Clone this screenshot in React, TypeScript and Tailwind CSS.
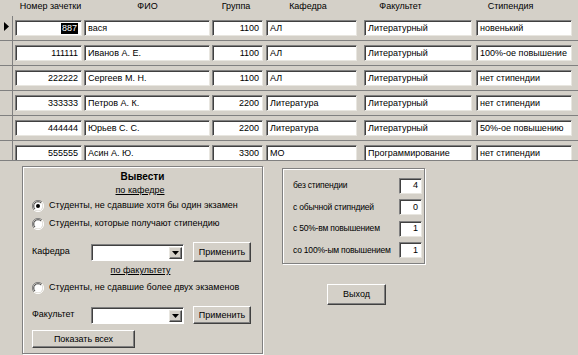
import React from "react";

const rows: string[][] = [
  ["887", "вася", "1100", "АЛ", "Литературный", "новенький"],
  ["111111", "Иванов А. Е.", "1100", "АЛ", "Литературный", "100%-ое повышение"],
  ["222222", "Сергеев М. Н.", "1100", "АЛ", "Литературный", "нет стипендии"],
  ["333333", "Петров А. К.", "2200", "Литература", "Литературный", "нет стипендии"],
  ["444444", "Юрьев С. С.", "2200", "Литература", "Литературный", "50%-ое повышению"],
  ["555555", "Асин А. Ю.", "3300", "МО", "Программирование", "нет стипендии"],
];

function Field({ className, right, children }: { className: string; right?: boolean; children: React.ReactNode }) {
  return (
    <div
      className={
        "h-[16px] bg-white border border-t-[#808080] border-l-[#808080] border-r-[#e8e6e0] border-b-[#e8e6e0] shadow-[inset_1px_1px_0_#404040] flex items-center overflow-hidden whitespace-nowrap leading-none " +
        (right ? "justify-end pr-[3px] " : "pl-[3px] ") +
        className
      }
    >
      {children}
    </div>
  );
}

function Button({ className, children }: { className: string; children: React.ReactNode }) {
  return (
    <div
      className={
        "bg-[#d4d0c8] border border-t-white border-l-white border-r-[#404040] border-b-[#404040] shadow-[inset_-1px_-1px_0_#808080] flex items-center justify-center leading-none whitespace-nowrap " +
        className
      }
    >
      {children}
    </div>
  );
}

function Radio({ checked }: { checked?: boolean }) {
  return (
    <svg width="12" height="12" viewBox="0 0 12 12" className="shrink-0">
      <path d="M10 2 A5.5 5.5 0 0 0 2 10" stroke="#808080" strokeWidth="1" fill="none" />
      <circle cx="6" cy="6" r="4.5" fill="white" />
      <path d="M9 3 A4.2 4.2 0 0 0 3 9" stroke="#404040" strokeWidth="1" fill="none" />
      <path d="M2 10 A5.5 5.5 0 0 0 10 2" stroke="#ffffff" strokeWidth="1" fill="none" />
      {checked && <circle cx="6" cy="6" r="2" fill="black" />}
    </svg>
  );
}

function Combo({ className }: { className: string }) {
  return (
    <div
      className={
        "h-[17px] bg-white border border-t-[#808080] border-l-[#808080] border-r-white border-b-white shadow-[inset_1px_1px_0_#404040] flex justify-end items-stretch p-[1px] pl-[2px] pt-[2px] " +
        className
      }
    >
      <div className="w-[13px] bg-[#d4d0c8] border border-t-[#e8e6e0] border-l-[#e8e6e0] border-r-[#404040] border-b-[#404040] shadow-[inset_-1px_-1px_0_#808080] flex items-center justify-center">
        <svg width="7" height="4" viewBox="0 0 7 4">
          <path d="M0 0 H7 L3.5 4 Z" fill="black" />
        </svg>
      </div>
    </div>
  );
}

function StatRow({ label, value }: { label: string; value: string }) {
  return (
    <div className="flex items-center h-[13px]">
      <div className="flex-1 text-[8.5px] tracking-[-0.2px] whitespace-nowrap">{label}</div>
      <Field className="w-[23px] h-[14px]" right>
        {value}
      </Field>
    </div>
  );
}

export default function App() {
  return (
    <div className="w-[578px] h-[355px] bg-[#d4d0c8] overflow-hidden text-[9px] text-black font-['Liberation_Sans',Arial,sans-serif]">
      {/* header */}
      <div className="h-[16px] flex items-center pb-[2px] whitespace-nowrap">
        <div className="w-[15px]" />
        <div className="w-[71px] text-center">Номер зачетки</div>
        <div className="w-[123px] text-center">ФИО</div>
        <div className="w-[54px] text-center">Группа</div>
        <div className="w-[90px] text-center">Кафедра</div>
        <div className="w-[95px] text-center">Факультет</div>
        <div className="w-[125px] text-center">Стипендия</div>
      </div>
      {/* grid */}
      <div className="h-[145px] overflow-hidden border-b border-[#808080]">
        {rows.map((r, i) => (
          <div key={i} className="h-[25px] flex border-b border-[#808080]">
            <div className="w-[13px] border-r border-[#808080] flex items-start pt-[6px] pl-[4px]">
              {i === 0 && (
                <svg width="5" height="9" viewBox="0 0 5 9">
                  <path d="M0 0 L5 4.5 L0 9 Z" fill="black" />
                </svg>
              )}
            </div>
            <div className="flex items-start pt-[4px]">
              <Field className="ml-[2px] w-[67px]" right>
                {i === 0 ? <span className="bg-black text-white px-[1px] py-[1px]">{r[0]}</span> : r[0]}
              </Field>
              <Field className="ml-[2px] w-[126px]">{r[1]}</Field>
              <Field className="ml-[2px] w-[51px]" right>
                {r[2]}
              </Field>
              <Field className="ml-[3px] w-[91px]">{r[3]}</Field>
              <Field className="ml-[7px] w-[108px]">{r[4]}</Field>
              <Field className="ml-[4px] w-[96px]">{r[5]}</Field>
            </div>
          </div>
        ))}
      </div>
      {/* bottom */}
      <div className="flex pl-[22px] pt-[5px]">
        <div className="w-[241px] h-[188px] border border-[#808080] shadow-[inset_1px_1px_0_#fff,1px_1px_0_#fff] flex flex-col px-[9px] pt-[3px] whitespace-nowrap">
          <div className="text-center font-bold text-[10px] h-[14px] leading-[14px]">Вывести</div>
          <div className="text-center underline h-[13px] leading-[13px] -ml-[5px]">по кафедре</div>
          <div className="flex items-center gap-[5px] h-[18px]">
            <Radio checked />
            <span>Студенты, не сдавшие хотя бы один экзамен</span>
          </div>
          <div className="flex items-center gap-[5px] h-[18px]">
            <Radio />
            <span>Студенты, которые получают стипендию</span>
          </div>
          <div className="flex items-center h-[22px] mt-[8px]">
            <div className="w-[59px]">Кафедра</div>
            <Combo className="w-[93px]" />
            <Button className="ml-[9px] w-[58px] h-[20px]">Применить</Button>
          </div>
          <div className="text-center underline h-[14px] leading-[14px] -ml-[4px]">по факультету</div>
          <div className="flex items-center gap-[5px] h-[22px]">
            <Radio />
            <span>Студенты, не сдавшие более двух экзаменов</span>
          </div>
          <div className="flex items-center h-[20px] mt-[6px]">
            <div className="w-[59px]">Факультет</div>
            <Combo className="w-[93px]" />
            <Button className="ml-[9px] w-[58px] h-[18px]">Применить</Button>
          </div>
          <Button className="mt-[5px] w-[103px] h-[18px]">Показать всех</Button>
        </div>
        <div className="ml-[19px] flex flex-col">
          <div className="mt-[2px] w-[143px] h-[96px] border border-[#808080] shadow-[inset_1px_1px_0_#fff,1px_1px_0_#fff] flex flex-col gap-[8.5px] pl-[10px] pr-[2px] pt-[10px]">
            <StatRow label="без стипендии" value="4" />
            <StatRow label="с обычной стипндией" value="0" />
            <StatRow label="с 50%-вм повышением" value="1" />
            <StatRow label="со 100%-ым повышением" value="1" />
          </div>
          <Button className="ml-[45px] mt-[20px] w-[59px] h-[21px]">Выход</Button>
        </div>
      </div>
    </div>
  );
}
